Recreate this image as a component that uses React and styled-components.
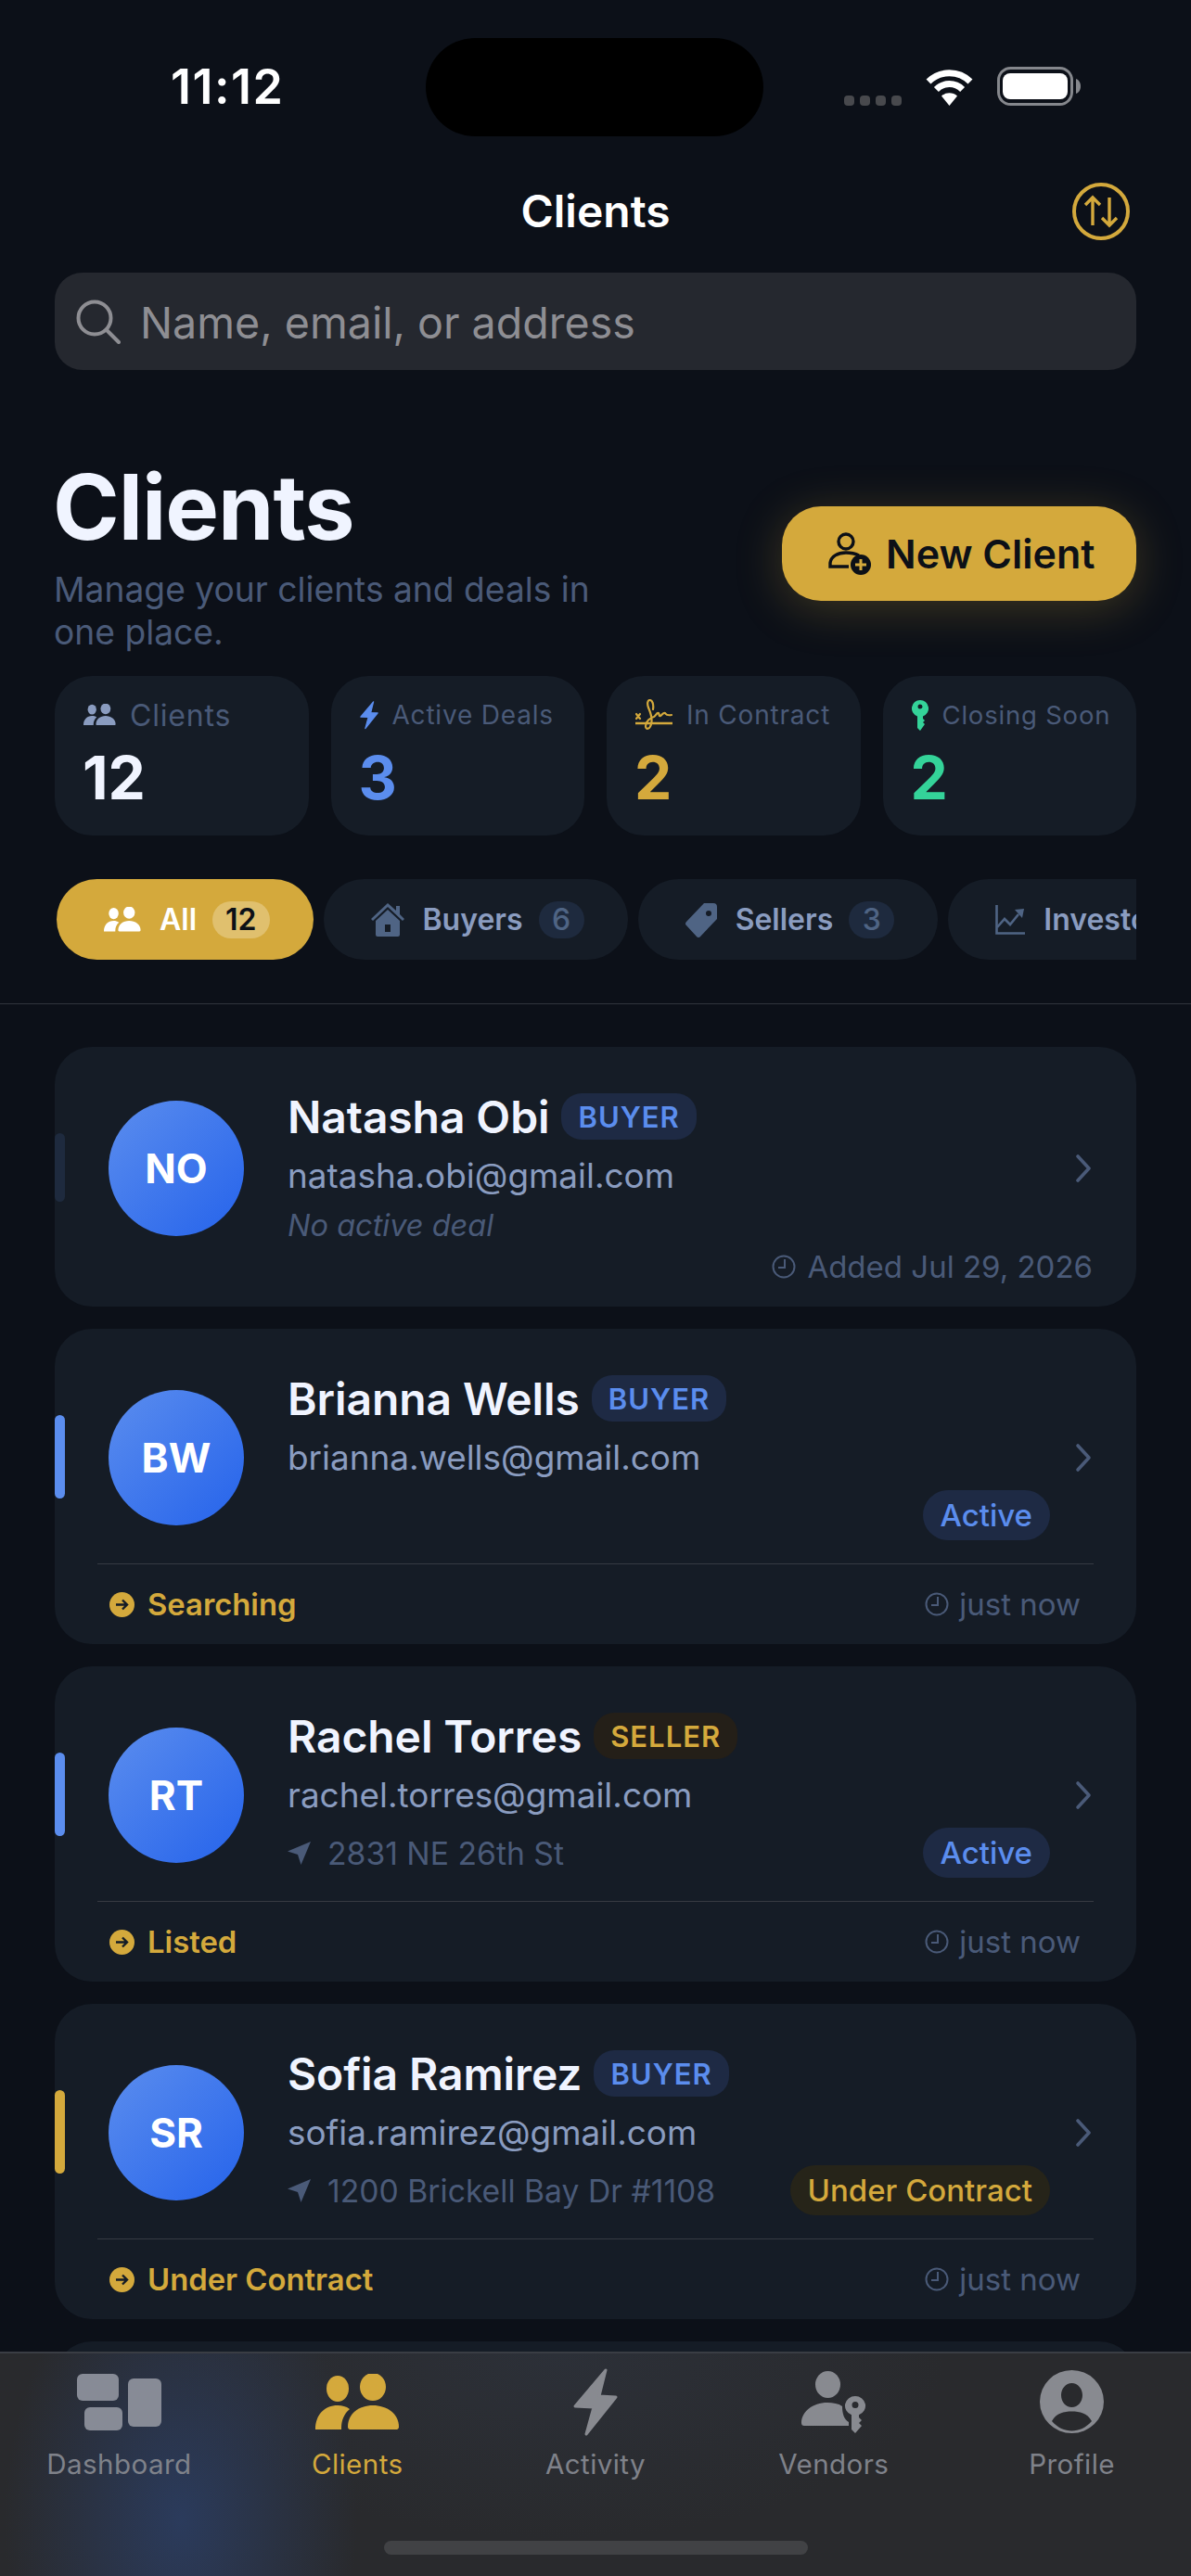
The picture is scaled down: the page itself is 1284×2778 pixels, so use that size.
import styled, { createGlobalStyle } from "styled-components";

const GlobalStyle = createGlobalStyle`
  html, body {
    margin: 0;
    padding: 0;
    background: #0c1018;
  }
  * {
    box-sizing: border-box;
  }
`;

const GOLD = "#d4a93c";
const BLUE = "#5b8dee";
const GREEN = "#34d399";
const MUTED = "#4a5a78";

const clients = [
  { initials: "NO", name: "Natasha Obi", role: "BUYER", email: "natasha.obi@gmail.com", bar: "#1e2a3e", note: "No active deal", added: "Added Jul 29, 2026" },
  { initials: "BW", name: "Brianna Wells", role: "BUYER", email: "brianna.wells@gmail.com", bar: BLUE, status: "Active", stage: "Searching" },
  { initials: "RT", name: "Rachel Torres", role: "SELLER", email: "rachel.torres@gmail.com", bar: BLUE, address: "2831 NE 26th St", status: "Active", stage: "Listed" },
  { initials: "SR", name: "Sofia Ramirez", role: "BUYER", email: "sofia.ramirez@gmail.com", bar: GOLD, address: "1200 Brickell Bay Dr #1108", status: "Under Contract", stage: "Under Contract" },
];

const PeopleIcon = ({ size = 36, color }) => (
  <svg width={size} height={size * 0.66} viewBox="0 0 91 60" fill={color}>
    <ellipse cx="24" cy="16" rx="12" ry="14" />
    <ellipse cx="62" cy="14" rx="14" ry="15" />
    <path d="M0 60C0 44 10 34 24 34c5 0 9 1 13 4-6 5-9 12-9 20v2z" />
    <path d="M35 57c0-14 12-23 27-23s28 9 28 23c0 2-1 3-3 3H38c-2 0-3-1-3-3z" />
  </svg>
);

const BoltIcon = ({ width, height, color }) => (
  <svg width={width} height={height} viewBox="0 0 48 74" fill={color} stroke={color} strokeWidth="3" strokeLinejoin="round">
    <path d="M35 3 28 31 46 32 14 72 22 43 2 42z" />
  </svg>
);

const SignatureIcon = () => (
  <svg width="40" height="34" viewBox="0 0 40 34" fill="none" stroke={GOLD} strokeWidth="2.200" strokeLinecap="round">
    <path d="M0 26h40" strokeWidth="2.600" />
    <path d="M1 16l4 5M5 16l-4 5" />
    <path d="M19 11C20 5 18 1 15.500 1 13 1 12.500 5 14 9c2 5 5 11 3 18-1.500 6-6 6-6 2 0-5 5-9 9-10 2-1 3-5 5-4 1 1 0 4 2 3 2-1 3-4 5-3 1 1 1 3 7 2" />
  </svg>
);

const KeyIcon = ({ color }) => (
  <svg width="18" height="33" viewBox="0 0 18 33" fill={color}>
    <path fillRule="evenodd" d="M9 0a9 9 0 0 1 3 17.5V20l2 2-2 2 2 2-5 7-3-3V17.5A9 9 0 0 1 9 0zm0 4.500a2.500 2.500 0 1 0 0 5 2.500 2.500 0 0 0 0-5z" />
  </svg>
);

const HouseIcon = () => (
  <svg width="36" height="36" viewBox="0 0 36 36" fill="#4f6484">
    <path d="M18 0 27 8V3h4v9l5 5-2 2L18 4 2 19l-2-2z" />
    <path fillRule="evenodd" d="M18 7 31 19v15a2 2 0 0 1-2 2H7a2 2 0 0 1-2-2V19zM15 23v8h6v-8z" />
  </svg>
);

const TagIcon = () => (
  <svg width="34" height="38" viewBox="0 0 34 38" fill="#4f6484">
    <path fillRule="evenodd" d="M20 1h10a4 4 0 0 1 4 4v13L16 37a2.500 2.500 0 0 1-4 0L1 25a2.500 2.500 0 0 1 0-4zm5 8a3 3 0 1 0 0 6 3 3 0 0 0 0-6z" />
  </svg>
);

const ChartIcon = () => (
  <svg width="32" height="32" viewBox="0 0 32 32" fill="none" stroke="#4f6484" strokeWidth="2.600">
    <path d="M1.500 0v30.500H32" />
    <path d="M2 24l8-9 6 6 9-11" />
    <path d="M21 5l10-1-2 10z" fill="#4f6484" stroke="none" />
  </svg>
);

const ClockIcon = ({ size = 26 }) => (
  <svg width={size} height={size} viewBox="0 0 26 26" fill="none" stroke={MUTED} strokeWidth="2">
    <circle cx="13" cy="13" r="11.500" />
    <path d="M14 5v9H7" />
  </svg>
);

const StageDot = () => (
  <svg width="27" height="27" viewBox="0 0 27 27">
    <circle cx="13.500" cy="13.500" r="13.500" fill={GOLD} />
    <path d="M7 13.500h12M14 8.500l5 5-5 5" fill="none" stroke="#151c26" strokeWidth="2.400" />
  </svg>
);

const LocationIcon = () => (
  <svg width="25" height="25" viewBox="0 0 25 25" fill={MUTED}>
    <path d="M25 0 0 10.500l11 3.500 3.500 11z" />
  </svg>
);

const ChevronIcon = () => (
  <ChevronWrap>
    <svg width="18" height="32" viewBox="0 0 18 32" fill="none" stroke={MUTED} strokeWidth="3.600" strokeLinecap="round" strokeLinejoin="round">
      <path d="M3 3l12 13L3 29" />
    </svg>
  </ChevronWrap>
);

const navItems = [
  {
    label: "Dashboard",
    icon: (
      <svg width="91" height="61" viewBox="0 0 91 61" fill="#878b96">
        <rect x="0" y="0" width="45" height="29" rx="6" />
        <rect x="55" y="5" width="36" height="52" rx="6" />
        <rect x="8" y="36" width="41" height="25" rx="6" />
      </svg>
    ),
  },
  { label: "Clients", active: true, icon: <PeopleIcon size={91} color={GOLD} /> },
  { label: "Activity", icon: <BoltIcon width={48} height={74} color="#888a90" /> },
  {
    label: "Vendors",
    icon: (
      <svg width="70" height="67" viewBox="0 0 70 67" fill="#888a90">
        <ellipse cx="28.500" cy="14.500" rx="13.500" ry="14.500" />
        <path d="M0 56C0 44 12 34 28 34c6 0 12 1 16 4 0 8 2 14 7 17v4H3c-2 0-3-1-3-3z" />
        <path fillRule="evenodd" d="M58 27a11 10.500 0 0 1 4 20.300V50l3 3-3 3 3 3-7 8-4-4V47.300A11 10.500 0 0 1 58 27zm0 6a3.500 3.500 0 1 0 0 7 3.500 3.500 0 0 0 0-7z" />
      </svg>
    ),
  },
  {
    label: "Profile",
    icon: (
      <svg width="69" height="68" viewBox="0 0 69 68" fill="#888a90">
        <path fillRule="evenodd" d="M34.500 0a34.500 34 0 1 0 0 68 34.500 34 0 0 0 0-68zM34.500 14c6.500 0 11.500 6 11.500 13s-5 13-11.500 13S23 34 23 27s5-13 11.500-13zM13 55c5-9 13-10.500 21.500-10.500S51 46 56 55c-6 7-14 10.500-21.500 10.500S19 62 13 55z" />
      </svg>
    ),
  },
];

const stats = [
  { label: "Clients", value: "12", color: "#f0f4ff", icon: <PeopleIcon size={35} color="#8a9cc0" />, size: 32 },
  { label: "Active Deals", value: "3", color: BLUE, icon: <BoltIcon width={20} height={34} color={BLUE} />, size: 28 },
  { label: "In Contract", value: "2", color: GOLD, icon: <SignatureIcon />, size: 28 },
  { label: "Closing Soon", value: "2", color: GREEN, icon: <KeyIcon color={GREEN} />, size: 27.5 },
];

const chips = [
  { label: "All", count: "12", active: true, icon: <PeopleIcon size={40} color="#ffffff" /> },
  { label: "Buyers", count: "6", icon: <HouseIcon /> },
  { label: "Sellers", count: "3", icon: <TagIcon /> },
  { label: "Investors", icon: <ChartIcon /> },
];

function ClientCard({ client }) {
  const { initials, name, role, email, bar, note, added, address, status, stage } = client;
  return (
    <Card>
      <AccentBar $color={bar} $tall={!!stage} />
      <CardRow>
        <Avatar>{initials}</Avatar>
        <Info>
          <NameRow>
            <Name>{name}</Name>
            <RoleTag $seller={role === "SELLER"}>{role}</RoleTag>
          </NameRow>
          <Email>{email}</Email>
          {note && <Note>{note}</Note>}
          {status && (
            <MetaRow>
              {address ? (
                <Address>
                  <LocationIcon />
                  {address}
                </Address>
              ) : (
                <span />
              )}
              <StatusPill $gold={status !== "Active"}>{status}</StatusPill>
            </MetaRow>
          )}
        </Info>
        <ChevronIcon />
      </CardRow>
      {added && (
        <AddedRow>
          <ClockIcon />
          {added}
        </AddedRow>
      )}
      {stage && (
        <CardFooter>
          <Stage>
            <StageDot />
            {stage}
          </Stage>
          <TimeAgo>
            <ClockIcon />
            just now
          </TimeAgo>
        </CardFooter>
      )}
    </Card>
  );
}

export default function App() {
  return (
    <Screen>
      <GlobalStyle />
      <StatusBar>
        <Time>11:12</Time>
        <Island />
        <StatusIcons>
          <SignalDots>
            <i />
            <i />
            <i />
            <i />
          </SignalDots>
          <svg width="55" height="40" viewBox="0 0 55 40" fill="none" stroke="#fff">
            <path d="M5 14A32 32 0 0 1 50 14" strokeWidth="7" />
            <path d="M13.400 22.400A20 20 0 0 1 41.600 22.400" strokeWidth="7" />
            <path d="M27.500 40 19 29.500A13 13 0 0 1 36 29.500z" fill="#fff" stroke="none" />
          </svg>
          <svg width="90" height="42" viewBox="0 0 90 42">
            <rect x="1.500" y="1.500" width="79" height="39" rx="13" fill="#0c1018" stroke="#85878c" strokeWidth="3" />
            <rect x="6" y="7" width="70" height="28" rx="8" fill="#fff" />
            <path d="M85 13c3 1 5 4 5 8s-2 7-5 8z" fill="#85878c" />
          </svg>
        </StatusIcons>
      </StatusBar>

      <TitleBar>
        <BarTitle>Clients</BarTitle>
        <SortButton>
          <svg width="62" height="62" viewBox="0 0 62 62" fill="none" stroke={GOLD} strokeWidth="3.400">
            <circle cx="31" cy="31" r="29" strokeWidth="4" />
            <path d="M22 46V16M14 24l8-8 8 8" />
            <path d="M40 16v30M32 38l8 8 8-8" />
          </svg>
        </SortButton>
      </TitleBar>

      <SearchBar>
        <svg width="48" height="48" viewBox="0 0 48 48" fill="none" stroke="#8e8e93" strokeWidth="4" strokeLinecap="round">
          <circle cx="20" cy="20" r="17.500" />
          <path d="M33 33l13 13" />
        </svg>
        <Placeholder>Name, email, or address</Placeholder>
      </SearchBar>

      <Hero>
        <div>
          <HeroTitle>Clients</HeroTitle>
          <HeroText>Manage your clients and deals in one place.</HeroText>
        </div>
        <NewClientButton>
          <svg width="46" height="46" viewBox="0 0 46 46" fill="none" stroke="#0c1017" strokeWidth="3.400">
            <circle cx="19" cy="10" r="8" />
            <path d="M33 25c-4-2-9-3-14-3-9 0-16 4-17 11v4h20" />
            <circle cx="35" cy="35" r="11" fill="#0c1017" stroke="none" />
            <path d="M35 29v12M29 35h12" stroke={GOLD} strokeWidth="3" />
          </svg>
          New Client
        </NewClientButton>
      </Hero>

      <StatGrid>
        {stats.map((s) => (
          <StatCard key={s.label}>
            <StatLabel $size={s.size}>
              <StatIcon>{s.icon}</StatIcon>
              {s.label}
            </StatLabel>
            <StatValue $color={s.color}>{s.value}</StatValue>
          </StatCard>
        ))}
      </StatGrid>

      <ChipRow>
        {chips.map((c) => (
          <Chip key={c.label} $active={c.active}>
            {c.icon}
            <span>{c.label}</span>
            {c.count && <ChipCount $active={c.active}>{c.count}</ChipCount>}
          </Chip>
        ))}
      </ChipRow>

      <Divider />

      <CardList>
        {clients.map((c) => (
          <ClientCard key={c.initials} client={c} />
        ))}
        <Card />
      </CardList>

      <TabBar>
        <Tabs>
          {navItems.map((t) => (
            <Tab key={t.label} $active={t.active}>
              <TabIcon>{t.icon}</TabIcon>
              {t.label}
            </Tab>
          ))}
        </Tabs>
        <HomeIndicator />
      </TabBar>
    </Screen>
  );
}

const Screen = styled.div`
  position: relative;
  width: 1284px;
  height: 2778px;
  overflow: hidden;
  background: #0c1018;
  font-family: Inter, "Liberation Sans", sans-serif;
`;

const StatusBar = styled.div`
  display: flex;
  align-items: flex-start;
  height: 186px;
  padding: 41px 119px 0 184px;
`;

const Time = styled.div`
  width: 275px;
  margin-top: 28px;
  font-size: 52px;
  line-height: 50px;
  font-weight: 600;
  letter-spacing: 1.5px;
  color: #fff;
`;

const Island = styled.div`
  width: 365px;
  height: 106px;
  border-radius: 53px;
  background: #000;
`;

const StatusIcons = styled.div`
  display: flex;
  align-items: flex-end;
  margin-left: 87px;
  margin-top: 31px;
  gap: 24px;
`;

const SignalDots = styled.div`
  display: flex;
  gap: 6px;
  i {
    display: block;
    width: 11px;
    height: 11px;
    border-radius: 4px;
    background: #48494d;
  }
`;

const TitleBar = styled.div`
  position: relative;
  display: flex;
  justify-content: center;
  align-items: center;
  height: 84px;
`;

const BarTitle = styled.div`
  margin-top: -2px;
  font-size: 48px;
  font-weight: 600;
  color: #fff;
`;

const SortButton = styled.div`
  position: absolute;
  right: 66px;
  top: 11px;
  height: 62px;
`;

const SearchBar = styled.div`
  display: flex;
  align-items: center;
  gap: 21px;
  height: 105px;
  margin: 24px 59px 0;
  padding: 0 23px;
  border-radius: 30px;
  background: #25282f;
`;

const Placeholder = styled.div`
  margin-top: 2px;
  font-size: 46.600px;
  color: #8e8e93;
`;

const Hero = styled.div`
  display: flex;
  justify-content: space-between;
  align-items: center;
  margin: 93px 59px 0;
`;

const HeroTitle = styled.div`
  margin-left: -2px;
  font-size: 97px;
  line-height: 110px;
  font-weight: 700;
  letter-spacing: -1px;
  color: #f0f4ff;
`;

const HeroText = styled.div`
  width: 600px;
  margin-top: 11px;
  margin-left: -1px;
  font-size: 37.200px;
  line-height: 46px;
  color: ${MUTED};
`;

const NewClientButton = styled.div`
  display: flex;
  align-items: center;
  gap: 16px;
  height: 102px;
  width: 382px;
  margin-top: -3px;
  padding-left: 50px;
  border-radius: 42px;
  background: ${GOLD};
  box-shadow: 0 8px 50px rgba(212, 169, 60, 0.25);
  font-size: 43px;
  font-weight: 600;
  color: #0c1017;
`;

const StatGrid = styled.div`
  display: grid;
  grid-template-columns: repeat(4, 1fr);
  gap: 24px;
  margin: 24px 59px 0;
`;

const StatCard = styled.div`
  height: 172px;
  padding: 22px 0 0 31px;
  border-radius: 40px;
  background: #151c26;
`;

const StatLabel = styled.div`
  display: flex;
  align-items: center;
  gap: 15px;
  height: 40px;
  font-size: ${(p) => p.$size}px;
  letter-spacing: 0.8px;
  white-space: nowrap;
  color: ${MUTED};
`;

const StatIcon = styled.span`
  display: flex;
  align-items: center;
`;

const StatValue = styled.div`
  margin-top: 16px;
  margin-left: -1px;
  font-size: 64px;
  line-height: 64px;
  font-weight: 700;
  color: ${(p) => p.$color};
`;

const ChipRow = styled.div`
  display: flex;
  gap: 11px;
  margin: 47px 59px 0;
  padding-left: 2px;
  overflow: hidden;
`;

const Chip = styled.div`
  display: flex;
  flex-shrink: 0;
  align-items: center;
  gap: 20px;
  height: 87px;
  padding: 0 47px 0 51px;
  border-radius: 44px;
  background: ${(p) => (p.$active ? GOLD : "#151c26")};
  font-size: 32px;
  font-weight: 600;
  color: ${(p) => (p.$active ? "#fff" : "#8a9cc0")};
`;

const ChipCount = styled.span`
  display: flex;
  justify-content: center;
  align-items: center;
  min-width: 49px;
  height: 40px;
  margin-left: -3px;
  padding: 0 ${(p) => (p.$active ? 14 : 13)}px;
  border-radius: 20px;
  background: ${(p) => (p.$active ? "#e0c06e" : "#1e2a3e")};
  color: ${(p) => (p.$active ? "#0c1017" : "#4f6484")};
  font-size: 32px;
  font-weight: ${(p) => (p.$active ? 600 : 500)};
`;

const Divider = styled.div`
  height: 1px;
  margin-top: 47px;
  background: #30343c;
`;

const CardList = styled.div`
  display: flex;
  flex-direction: column;
  gap: 24px;
  margin: 46px 59px 0;
`;

const Card = styled.div`
  position: relative;
  flex-shrink: 0;
  min-height: 120px;
  padding: 50px 46px 0;
  border-radius: 40px;
  background: #151c26;
`;

const AccentBar = styled.div`
  position: absolute;
  left: 0;
  top: 93px;
  width: 11px;
  height: ${(p) => (p.$tall ? 90 : 74)}px;
  border-radius: 6px;
  background: ${(p) => p.$color};
`;

const CardRow = styled.div`
  display: flex;
  align-items: center;
  padding-left: 12px;
`;

const Avatar = styled.div`
  display: flex;
  flex-shrink: 0;
  justify-content: center;
  align-items: center;
  width: 146px;
  height: 146px;
  margin-right: 47px;
  border-radius: 50%;
  background: linear-gradient(135deg, #5b8dee, #2563eb);
  font-size: 44px;
  font-weight: 700;
  color: #fff;
`;

const Info = styled.div`
  flex: 1;
  min-width: 0;
  margin-right: 27px;
`;

const NameRow = styled.div`
  display: flex;
  align-items: center;
  gap: 13px;
  height: 50px;
`;

const Name = styled.div`
  margin-top: 1px;
  font-size: 48px;
  font-weight: 600;
  letter-spacing: -0.1px;
  color: #f0f4ff;
`;

const RoleTag = styled.div`
  display: flex;
  align-items: center;
  height: 50px;
  padding: 0 18px;
  border-radius: 22px;
  background: ${(p) => (p.$seller ? "#241f18" : "#1e2a44")};
  font-size: 31px;
  font-weight: 600;
  letter-spacing: 1px;
  color: ${(p) => (p.$seller ? GOLD : BLUE)};
`;

const Email = styled.div`
  margin-top: 15px;
  font-size: 36.900px;
  line-height: 48px;
  color: #8a9cc0;
`;

const Note = styled.div`
  margin-top: 12px;
  font-size: 32.500px;
  line-height: 36px;
  font-style: italic;
  color: ${MUTED};
`;

const MetaRow = styled.div`
  display: flex;
  justify-content: space-between;
  align-items: center;
  margin-top: 11px;
`;

const Address = styled.div`
  display: flex;
  align-items: center;
  gap: 18px;
  font-size: 33.700px;
  color: ${MUTED};
`;

const StatusPill = styled.div`
  display: flex;
  align-items: center;
  height: 54px;
  padding: 0 19px;
  border-radius: 27px;
  background: ${(p) => (p.$gold ? "#262419" : "#1e2a44")};
  font-size: 33px;
  font-weight: 500;
  color: ${(p) => (p.$gold ? GOLD : BLUE)};
`;

const AddedRow = styled.div`
  display: flex;
  justify-content: flex-end;
  align-items: center;
  gap: 12px;
  height: 40px;
  margin: 6px 1px 23px 0;
  font-size: 33px;
  color: ${MUTED};
`;

const CardFooter = styled.div`
  display: flex;
  justify-content: space-between;
  align-items: center;
  height: 87px;
  margin-top: 25px;
  padding: 0 14px 0 13px;
  border-top: 1px solid #363a42;
`;

const Stage = styled.div`
  display: flex;
  align-items: center;
  gap: 14px;
  font-size: 32.800px;
  font-weight: 600;
  color: ${GOLD};
`;

const TimeAgo = styled.div`
  display: flex;
  align-items: center;
  gap: 11px;
  font-size: 33px;
  color: ${MUTED};
`;

const ChevronWrap = styled.div`
  display: flex;
  margin-right: 2px;
`;

const TabBar = styled.div`
  position: absolute;
  left: 0;
  right: 0;
  bottom: 0;
  height: 242px;
  border-top: 2px solid #3a3d44;
  background:
    radial-gradient(ellipse 190px 300px at 195px 75%, #2b3b5c 0%, rgba(43, 59, 92, 0) 100%),
    radial-gradient(ellipse 420px 200px at 600px 0%, #2c3038 0%, rgba(44, 48, 56, 0) 100%),
    #292a2d;
`;

const Tabs = styled.div`
  display: grid;
  grid-template-columns: repeat(5, 1fr);
  height: 202px;
  padding-top: 14px;
`;

const Tab = styled.div`
  display: flex;
  flex-direction: column;
  align-items: center;
  font-size: 29.600px;
  letter-spacing: 0.4px;
  color: ${(p) => (p.$active ? GOLD : "#7f828a")};
`;

const TabIcon = styled.div`
  display: flex;
  align-items: center;
  height: 76px;
  margin-bottom: 11px;
`;

const HomeIndicator = styled.div`
  width: 457px;
  height: 15px;
  margin: 0 auto;
  border-radius: 8px;
  background: #414245;
`;
